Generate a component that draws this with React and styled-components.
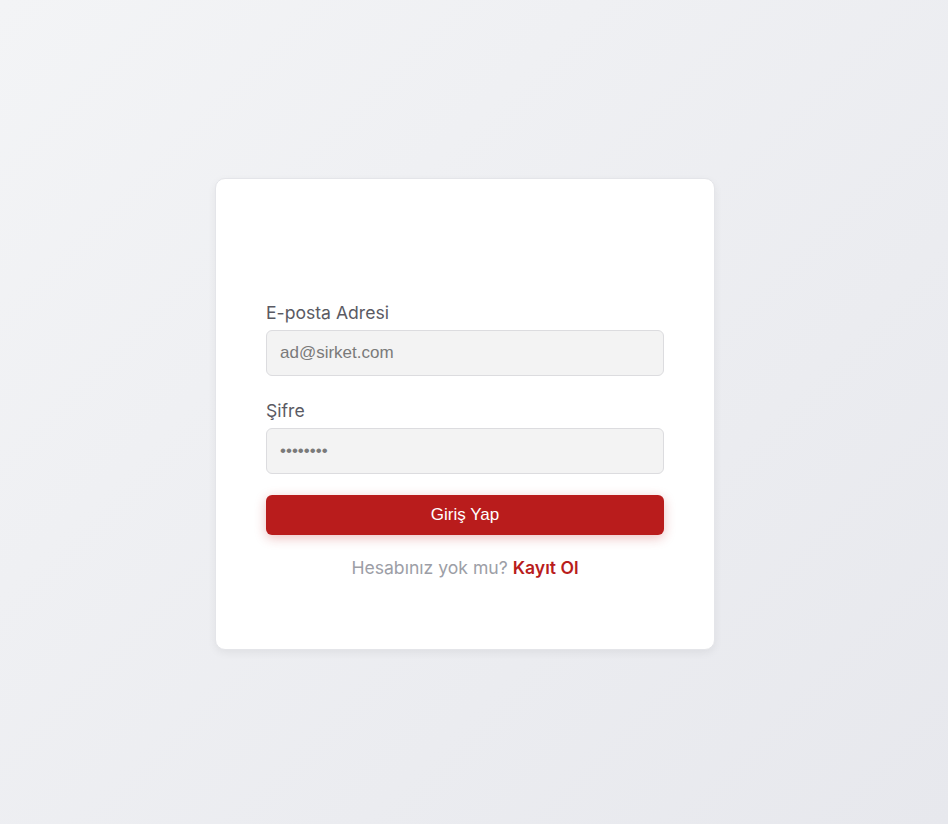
import React from "react";
import styled, { createGlobalStyle } from "styled-components";

const Global = createGlobalStyle`
  html, body { margin: 0; padding: 0; }
  body {
    font-family: Inter, "Noto Sans", sans-serif;
    background: linear-gradient(135deg, #f3f4f6 0%, #e7e8ed 100%);
    min-height: 100vh;
  }
  * { box-sizing: border-box; }
`;

const Page = styled.div`
  min-height: 824px;
  display: flex;
  align-items: flex-start;
  justify-content: center;
  padding-top: 178px;
  padding-right: 18px;
`;

const Card = styled.form`
  width: 500px;
  height: 472px;
  flex-shrink: 0;
  background: #ffffff;
  border-radius: 10px;
  border: 1px solid #e4e5e9;
  box-shadow: 0 3px 8px rgba(0, 0, 0, 0.06);
  padding: 123px 50px 0;
  display: flex;
  flex-direction: column;
`;

const Field = styled.div`
  display: flex;
  flex-direction: column;
  gap: 7px;
  margin-bottom: ${(p) => p.$mb || 0}px;
`;

const Label = styled.label`
  font-family: Inter, sans-serif;
  font-size: 17.6px;
  line-height: 21px;
  color: #5a5a63;
`;

const Input = styled.input`
  height: 46px;
  width: 100%;
  border: 1px solid #dcdcdf;
  border-radius: 6px;
  background: #f3f3f3;
  padding: 0 13px;
  font-family: "Liberation Sans", Arial, sans-serif;
  font-size: 17px;
  color: #333;
  outline: none;
  &::placeholder { color: #7a7a7a; }
`;

const Button = styled.button`
  margin-top: 21px;
  height: 40px;
  width: 100%;
  border: none;
  border-radius: 6px;
  background: #b91c1c;
  color: #fff;
  font-family: "Liberation Sans", Arial, sans-serif;
  font-size: 17px;
  box-shadow: 0 3px 12px rgba(185, 28, 28, 0.28);
  cursor: pointer;
`;

const Footer = styled.p`
  margin: 22px 0 0;
  text-align: center;
  font-family: Inter, sans-serif;
  font-size: 17.6px;
  line-height: 21px;
  color: #9c9ea6;
`;

const Link = styled.a`
  color: #b91c1c;
  font-weight: 600;
  text-decoration: none;
`;

export default function App() {
  return (
    <>
      <Global />
      <Page>
        <Card onSubmit={(e) => e.preventDefault()}>
          <Field $mb={24}>
            <Label>E-posta Adresi</Label>
            <Input type="email" placeholder="ad@sirket.com" />
          </Field>
          <Field>
            <Label>Şifre</Label>
            <Input type="password" placeholder="••••••••" />
          </Field>
          <Button type="submit">Giriş Yap</Button>
          <Footer>
            Hesabınız yok mu? <Link href="#">Kayıt Ol</Link>
          </Footer>
        </Card>
      </Page>
    </>
  );
}
